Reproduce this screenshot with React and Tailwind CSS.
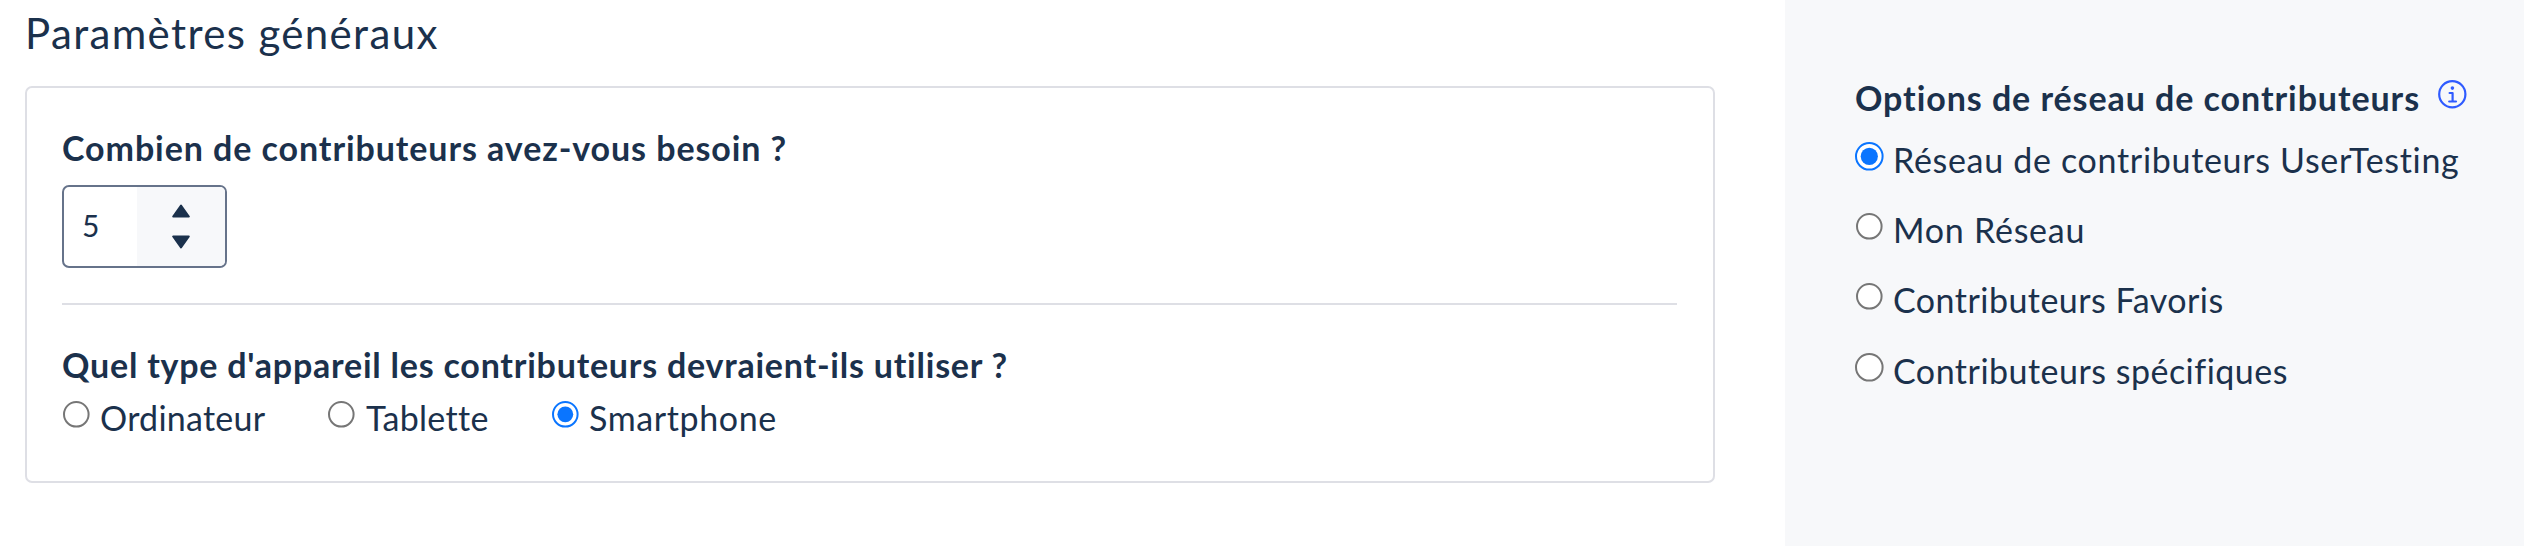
import React from "react";

function Radio({ checked = false, large = false, className = "" }) {
  const stroke = checked ? "#0a75ff" : "#767676";
  return (
    <span className={`block shrink-0 ${className}`}>
      <svg
        className={large ? "block h-[29px] w-[29px]" : "block h-[27px] w-[27px]"}
        viewBox={large ? "0 0 29 29" : "0 0 27 27"}
      >
        <circle
          cx={large ? 14.3 : 13.3}
          cy={large ? 14.3 : 13.3}
          r={large ? 13.3 : 12.3}
          fill="#fff"
          stroke={stroke}
          strokeWidth="2"
        />
        {checked && (
          <circle cx={large ? 14.3 : 13.3} cy={large ? 14.3 : 13.3} r={large ? 8.6 : 7.9} fill="#0a75ff" />
        )}
      </svg>
    </span>
  );
}

function InfoIcon() {
  return (
    <svg className="block h-[29px] w-[29px]" viewBox="0 0 29 29" fill="none" stroke="#2f5bff">
      <circle cx="14.3" cy="14.3" r="13.1" strokeWidth="2.2" />
      <circle cx="14.4" cy="8.1" r="1.8" fill="#2f5bff" stroke="none" />
      <path d="M11.6 13h3v8.4M11.2 21.5h6.8" strokeWidth="2.2" strokeLinecap="round" strokeLinejoin="round" />
    </svg>
  );
}

const networks = [
  { label: "Réseau de contributeurs UserTesting", row: "h-10 mb-[30px] pl-[11px]", track: "tracking-[0.69px]", radio: "pt-[3px]", checked: true, large: true, gap: "gap-[9px]" },
  { label: "Mon Réseau", row: "h-10 mb-[30px] pl-[12px]", track: "tracking-[0.75px]", radio: "pt-[4px]", gap: "gap-[10px]" },
  { label: "Contributeurs Favoris", row: "h-10 mb-[31px] pl-[12px]", track: "tracking-[0.47px]", radio: "pt-[4px]", gap: "gap-[10px]" },
  { label: "Contributeurs spécifiques", row: "h-10 pl-[11px]", track: "tracking-[0.49px]", radio: "pt-[3px]", large: true, gap: "gap-[9px]" },
];

export default function App() {
  return (
    <div className="flex h-[546px] w-full overflow-hidden bg-white font-[Lato,sans-serif] text-[34px] leading-[42px] whitespace-nowrap text-[#1b314c]">
      <main className="w-[1785px] shrink-0 pt-2 pr-[70px] pl-[25px]">
        <h1 className="h-[50px] text-[42px] leading-[50px] tracking-[1.36px]">Paramètres généraux</h1>
        <section className="mt-7 h-[397px] rounded-[7px] border-2 border-[#dedfe5] pt-[39px] pr-[36px] pl-[35px]">
          <h2 className="h-10 font-bold tracking-[0.92px]">Combien de contributeurs avez-vous besoin ?</h2>
          <div className="mt-[18px] flex h-[83px] w-[165px] overflow-hidden rounded-[7px] border-2 border-[#66738a]">
            <div className="flex w-[73px] items-center pb-[3px] pl-[18px] text-[30px]">5</div>
            <div className="flex grow flex-col items-center justify-center gap-[17px] bg-[#f7f8fa]">
              <svg className="h-[14px] w-[18px]" viewBox="0 0 18 14" fill="#1b314c" stroke="#1b314c" strokeWidth="2" strokeLinejoin="round">
                <path d="M9 1.5 16.8 12.5H1.2Z" />
              </svg>
              <svg className="h-[14px] w-[18px]" viewBox="0 0 18 14" fill="#1b314c" stroke="#1b314c" strokeWidth="2" strokeLinejoin="round">
                <path d="M9 12.5 1.2 1.5H16.8Z" />
              </svg>
            </div>
          </div>
          <hr className="mt-[35px] border-t-2 border-[#dedfe5]" />
          <h2 className="mt-[39px] h-10 font-bold tracking-[0.77px]">Quel type d'appareil les contributeurs devraient-ils utiliser ?</h2>
          <div className="mt-[13px] flex h-10">
            <label className="flex w-[265px] gap-[10px] pl-px">
              <Radio className="pt-[4px]" />
              <span className="tracking-[0.26px]">Ordinateur</span>
            </label>
            <label className="flex w-[224px] gap-[11px] pl-px">
              <Radio className="pt-[4px]" />
              <span className="tracking-[0.3px]">Tablette</span>
            </label>
            <label className="flex gap-[10px] pl-px">
              <Radio className="pt-[4px]" checked />
              <span className="tracking-[0.62px]">Smartphone</span>
            </label>
          </div>
        </section>
      </main>
      <aside className="grow bg-[#f7f8fa] pt-[77px] pl-[59px]">
        <div className="mb-[22px] flex h-10 pl-[11px]">
          <h2 className="w-[583px] font-bold tracking-[0.93px]">Options de réseau de contributeurs</h2>
          <div className="pt-[3px]">
            <InfoIcon />
          </div>
        </div>
        {networks.map((n) => (
          <label key={n.label} className={`flex ${n.row} ${n.gap}`}>
            <Radio className={n.radio} checked={n.checked} large={n.large} />
            <span className={n.track}>{n.label}</span>
          </label>
        ))}
      </aside>
    </div>
  );
}
